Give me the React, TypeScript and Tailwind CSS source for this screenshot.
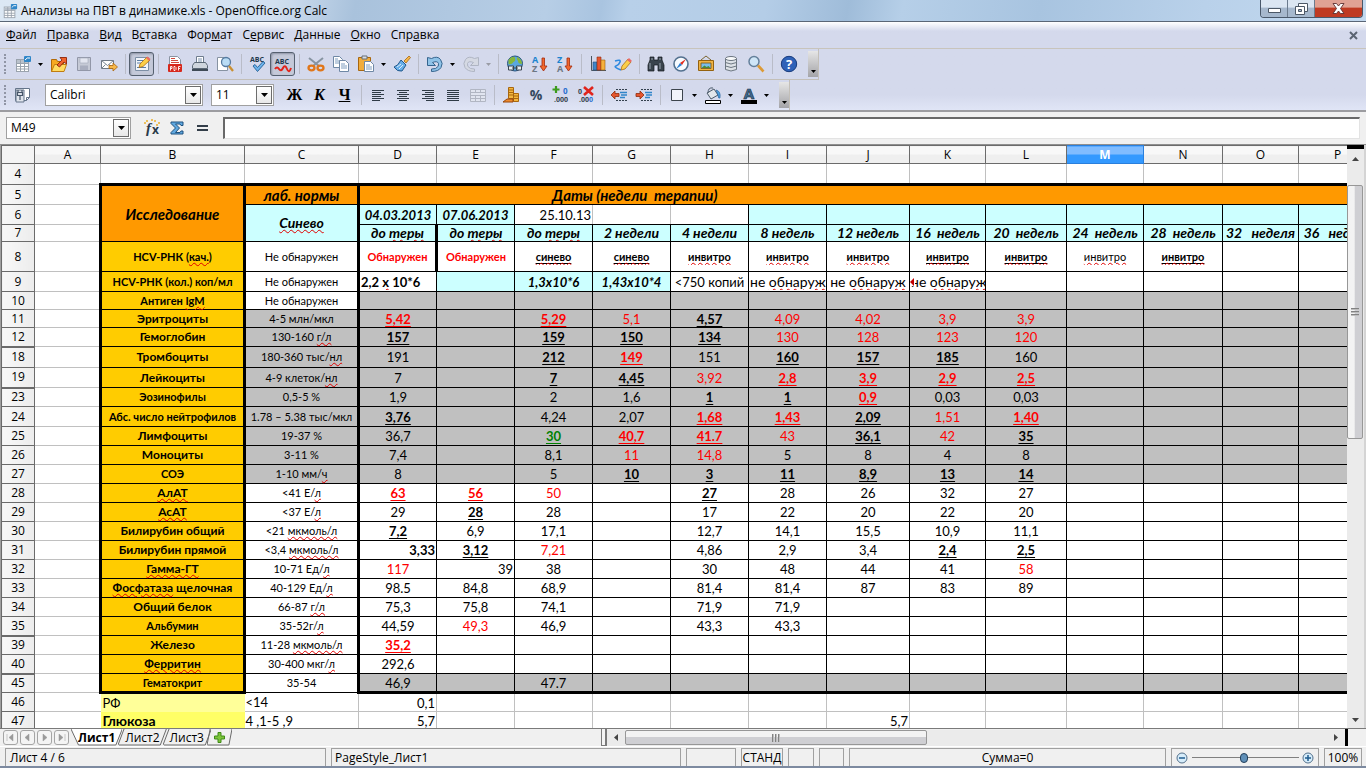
import type { ReactNode } from "react";
import { clsx } from "clsx";

const COLUMNS = [
  { name: "A", width: "w-[66px]" },
  { name: "B", width: "w-[144px]" },
  { name: "C", width: "w-[114px]" },
  { name: "D", width: "w-[78px]" },
  { name: "E", width: "w-[78px]" },
  { name: "F", width: "w-[78px]" },
  { name: "G", width: "w-[78px]" },
  { name: "H", width: "w-[78px]" },
  { name: "I", width: "w-[78px]" },
  { name: "J", width: "w-[83px]" },
  { name: "K", width: "w-[76px]" },
  { name: "L", width: "w-[81px]" },
  { name: "M", width: "w-[77px]" },
  { name: "N", width: "w-[79px]" },
  { name: "O", width: "w-[76px]" },
  { name: "P", width: "w-[78px]" },
];

const VALUE_COLUMNS = 13;

interface SheetRow {
  n: number;
  height: string;
  label: string;
  smallLabel?: boolean;
  norm: string;
  normFill?: string;
  fill: string;
  // "flags|text": b bold, u underline, r red, g green, i italic, s small, l large, R right, L left, c cyan, m overflow mark
  // words in {braces} are marked by the spell checker
  cells: string[];
  foldedBelow?: boolean;
}

const GREY = "bg-[#c0c0c0]";
const CYAN = "bg-[#ccffff]";

const ROWS: SheetRow[] = [
  {
    n: 8, height: "h-[30px]", label: "HCV-РНК ({кач.})", smallLabel: true, norm: "Не обнаружен", fill: "bg-white",
    cells: ["brs|Обнаружен", "brs|Обнаружен", "bus|{синево}", "bus|{синево}", "bs|{инвитро}", "bs|{инвитро}", "bs|{инвитро}", "bus|{инвитро}", "bus|{инвитро}", "s|{инвитро}", "bus|{инвитро}"],
  },
  {
    n: 9, height: "h-[20px]", label: "HCV-РНК (кол.) коп/мл", smallLabel: true, norm: "Не обнаружен", fill: "bg-white",
    cells: ["bL|2,2 {х} 10*6", "c|", "bic|1,3x10*6", "bic|1,43x10*4", "|<750 копий", "l|не {обнаруж}", "l|не {обнаруж}", "lm|не {обнаруж}"],
  },
  { n: 10, height: "h-[18px]", label: "Антиген {IgM}", smallLabel: true, norm: "Не обнаружен", fill: GREY, cells: [] },
  {
    n: 11, height: "h-[18px]", label: "Эритроциты", norm: "4-5 млн/мкл", normFill: GREY, fill: GREY,
    cells: ["bur|5,42", "", "bur|5,29", "r|5,1", "bu|4,57", "r|4,09", "r|4,02", "r|3,9", "r|3,9"],
  },
  {
    n: 12, height: "h-[19px]", label: "Гемоглобин", norm: "130-160 {г/л}", normFill: GREY, fill: GREY, foldedBelow: true,
    cells: ["bu|157", "", "bu|159", "bu|150", "bu|134", "r|130", "r|128", "r|123", "r|120"],
  },
  {
    n: 18, height: "h-[21px]", label: "Тромбоциты", norm: "180-360 тыс/{нл}", normFill: GREY, fill: GREY,
    cells: ["191", "", "bu|212", "bur|149", "151", "bu|160", "bu|157", "bu|185", "160"],
  },
  {
    n: 19, height: "h-[20px]", label: "Лейкоциты", norm: "4-9 клеток/{нл}", normFill: GREY, fill: GREY, foldedBelow: true,
    cells: ["7", "", "bu|7", "bu|4,45", "r|3,92", "bur|2,8", "bur|3,9", "bur|2,9", "bur|2,5"],
  },
  {
    n: 23, height: "h-[19px]", label: "Эозинофилы", smallLabel: true, norm: "0,5-5 %", normFill: GREY, fill: GREY,
    cells: ["1,9", "", "2", "1,6", "bu|1", "bu|1", "bur|0,9", "0,03", "0,03"],
  },
  {
    n: 24, height: "h-[20px]", label: "Абс. число нейтрофилов", smallLabel: true, norm: "1.78 – 5.38 тыс/мкл", normFill: GREY, fill: GREY,
    cells: ["bu|3,76", "", "4,24", "2,07", "bur|1,68", "bur|1,43", "bu|2,09", "r|1,51", "bur|1,40"],
  },
  {
    n: 25, height: "h-[19px]", label: "Лимфоциты", norm: "19-37 %", normFill: GREY, fill: GREY,
    cells: ["36,7", "", "bug|30", "bur|40,7", "bur|41.7", "r|43", "bu|36,1", "r|42", "bu|35"],
  },
  {
    n: 26, height: "h-[19px]", label: "Моноциты", norm: "3-11 %", normFill: GREY, fill: GREY,
    cells: ["7,4", "", "8,1", "r|11", "r|14,8", "5", "8", "4", "8"],
  },
  {
    n: 27, height: "h-[19px]", label: "СОЭ", smallLabel: true, norm: "1-10 мм/{ч}", normFill: GREY, fill: GREY,
    cells: ["8", "", "5", "bu|10", "bu|3", "bu|11", "bu|8,9", "bu|13", "bu|14"],
  },
  {
    n: 28, height: "h-[19px]", label: "{АлАТ}", norm: "<41 Е/{л}", fill: "bg-white",
    cells: ["bur|63", "bur|56", "r|50", "", "bu|27", "28", "26", "32", "27"],
  },
  {
    n: 29, height: "h-[19px]", label: "{АсАТ}", norm: "<37 Е/{л}", fill: "bg-white",
    cells: ["29", "bu|28", "28", "", "17", "22", "20", "22", "20"],
  },
  {
    n: 30, height: "h-[19px]", label: "Билирубин общий", norm: "<21 {мкмоль/л}", fill: "bg-white",
    cells: ["bu|7,2", "6,9", "17,1", "", "12,7", "14,1", "15,5", "10,9", "11,1"],
  },
  {
    n: 31, height: "h-[19px]", label: "Билирубин прямой", norm: "<3,4 {мкмоль/л}", fill: "bg-white",
    cells: ["bR|3,33", "bu|3,12", "r|7,21", "", "4,86", "2,9", "3,4", "bu|2,4", "bu|2,5"],
  },
  {
    n: 32, height: "h-[19px]", label: "{Гамма-ГТ}", norm: "10-71 Ед/{л}", fill: "bg-white",
    cells: ["r|117", "R|39", "38", "", "30", "48", "44", "41", "r|58"],
  },
  {
    n: 33, height: "h-[19px]", label: "{Фосфатаза} щелочная", norm: "40-129 Ед/{л}", fill: "bg-white",
    cells: ["98.5", "84,8", "68,9", "", "81,4", "81,4", "87", "83", "89"],
  },
  {
    n: 34, height: "h-[19px]", label: "Общий белок", norm: "66-87 {г/л}", fill: "bg-white",
    cells: ["75,3", "75,8", "74,1", "", "71,9", "71,9"],
  },
  {
    n: 35, height: "h-[19px]", label: "Альбумин", smallLabel: true, norm: "35-52г/{л}", fill: "bg-white", foldedBelow: true,
    cells: ["44,59", "r|49,3", "46,9", "", "43,3", "43,3"],
  },
  { n: 39, height: "h-[19px]", label: "Железо", norm: "11-28 {мкмоль/л}", fill: "bg-white", cells: ["bur|35,2"] },
  { n: 40, height: "h-[19px]", label: "{Ферритин}", norm: "30-400 мкг/{л}", fill: "bg-white", foldedBelow: true, cells: ["292,6"] },
  { n: 45, height: "h-[19px]", label: "Гематокрит", smallLabel: true, norm: "35-54", fill: GREY, cells: ["46,9", "", "47.7"] },
];

const WEEKS = ["до {теры}", "до {теры}", "до {теры}", "2 недели", "4 недели", "8 недель", "12 недель", "16  недель", "20  недель", "24  недель", "28  недель", "32   неделя", "36   недель"];

function SpellText({ text }: { text: string }) {
  return (
    <>
      {text.split(/[{}]/).map((part, i) =>
        i % 2 === 1 ? (
          <span key={i} className="underline decoration-[#e00000] decoration-wavy decoration-1 underline-offset-1">{part}</span>
        ) : (
          part
        )
      )}
    </>
  );
}

function ValueCell({ value, fill, className }: { value: string; fill: string; className?: string }) {
  const bar = value.indexOf("|");
  const flags = bar >= 0 ? value.slice(0, bar) : "";
  const text = bar >= 0 ? value.slice(bar + 1) : value;
  const has = (flag: string) => flags.includes(flag);
  return (
    <td className={clsx("border border-black p-0", has("c") ? CYAN : fill, className)}>
      <div
        className={clsx(
          "relative overflow-hidden whitespace-pre px-px leading-4",
          has("s") ? "text-[11px]" : has("l") ? "text-sm" : "text-[13px]",
          has("b") && "font-bold",
          has("i") && "italic",
          has("u") && "underline underline-offset-2",
          has("r") && "text-[#ff0000]",
          has("g") && "text-[#008000]",
          has("R") ? "text-right" : has("L") ? "text-left" : "text-center"
        )}
      >
        {has("m") && (
          <svg className="absolute left-0 top-1 bg-white" width="5" height="8" viewBox="0 0 5 8">
            <path d="M4 0v8L0 4z" fill="#c00000" />
          </svg>
        )}
        <SpellText text={text} />
      </div>
    </td>
  );
}

function RowHeader({ n, folded }: { n: number; folded?: boolean }) {
  return (
    <th
      scope="row"
      className={clsx(
        "border border-[#6b6b6b] bg-linear-to-r from-[#f8f8f8] to-[#ececec] p-0 text-center font-['Open_Sans','Noto_Sans',sans-serif] text-xs leading-4 font-normal not-italic",
        folded && "border-b-2"
      )}
    >
      {n}
    </th>
  );
}

const GRID = "border border-[#c0c0c0] p-0 bg-white leading-4";
const B_EDGES = "border-l-[3px] border-r-[3px]";

function Sheet() {
  return (
    <table className="w-[1375px] table-fixed border-collapse text-[13px] text-black font-['Lato','Noto_Sans',sans-serif]">
      <colgroup>
        <col className="w-[33px]" />
        {COLUMNS.map((column) => (
          <col key={column.name} className={column.width} />
        ))}
      </colgroup>
      <thead>
        <tr className="h-[18px] font-['Open_Sans','Noto_Sans',sans-serif] text-xs leading-4">
          <td className="border border-[#6b6b6b] bg-[#f4f4f4] p-0" />
          {COLUMNS.map((column) => (
            <th
              key={column.name}
              scope="col"
              className={clsx(
                "border p-0",
                column.name === "M"
                  ? "border-[#2a7fdc] bg-linear-to-b from-[#80bcff] from-50% to-[#3399ff] to-50% font-bold text-white"
                  : "border-[#6b6b6b] bg-linear-to-b from-[#f8f8f8] from-50% to-[#efefef] to-50% font-normal"
              )}
            >
              {column.name}
            </th>
          ))}
        </tr>
      </thead>
      <tbody>
        <tr className="h-[21px]">
          <RowHeader n={4} />
          {COLUMNS.map((column) => (
            <td key={column.name} className={GRID} />
          ))}
        </tr>
        <tr className="h-[20px] text-center text-[15px] font-bold italic">
          <RowHeader n={5} />
          <td className={GRID} />
          <td rowSpan={3} className={clsx("border border-t-[3px] border-black bg-[#ff9900] p-0 leading-4", B_EDGES)}>Исследование</td>
          <td className="border border-t-[3px] border-r-[3px] border-black bg-[#ff9900] p-0 leading-4">лаб. нормы</td>
          <td colSpan={7} className="border-t-[3px] border-b border-black bg-[#ff9900] p-0 leading-4 whitespace-pre">Даты (недели  терапии)</td>
          <td colSpan={6} className="border-t-[3px] border-b border-black bg-[#ff9900] p-0" />
        </tr>
        <tr className="h-[20px]">
          <RowHeader n={6} />
          <td className={GRID} />
          <td rowSpan={2} className={clsx("border border-r-[3px] border-black p-0 text-center text-sm font-bold italic", CYAN)}>
            <SpellText text="{Синево}" />
          </td>
          <ValueCell value="bic|04.03.2013" fill={CYAN} />
          <ValueCell value="bic|07.06.2013" fill={CYAN} />
          <ValueCell value="R|25.10.13" fill="bg-white" className="border-r-[#c0c0c0]" />
          <ValueCell value="" fill="bg-white" className="border-r-[#c0c0c0]" />
          <ValueCell value="" fill="bg-white" />
          {COLUMNS.slice(8).map((column) => (
            <ValueCell key={column.name} value="" fill={CYAN} />
          ))}
        </tr>
        <tr className="h-[17px]">
          <RowHeader n={7} />
          <td className={GRID} />
          {WEEKS.map((week, i) => (
            <ValueCell key={i} value={`bil|${week}`} fill={CYAN} className={i === 1 ? "border-l-[3px]" : undefined} />
          ))}
        </tr>
        {ROWS.map((row) => (
          <tr key={row.n} className={row.height}>
            <RowHeader n={row.n} folded={row.foldedBelow} />
            <td className={GRID} />
            <td
              className={clsx(
                "border border-black bg-[#ffcc00] p-0 text-center leading-4 font-bold whitespace-nowrap",
                row.smallLabel ? "text-[11px]" : "text-xs",
                B_EDGES,
                row.n === 45 && "border-b-[3px]"
              )}
            >
              <SpellText text={row.label} />
            </td>
            <td className={clsx("border border-r-[3px] border-black p-0 text-center text-[11px] leading-4 whitespace-nowrap", row.normFill ?? "bg-white")}>
              <SpellText text={row.norm} />
            </td>
            {Array.from({ length: VALUE_COLUMNS }, (_, i) => (
              <ValueCell
                key={i}
                value={row.cells[i] ?? ""}
                fill={row.fill}
                className={clsx(row.n === 8 && i === 1 && "border-l-[3px]", row.n === 45 && "border-b-[3px]")}
              />
            ))}
          </tr>
        ))}
        <tr className="h-[19px]">
          <RowHeader n={46} />
          <td className="border border-r-0 border-[#c0c0c0] p-0" />
          <td className="bg-[#ffff99] p-0 pl-0.5 leading-4">РФ</td>
          <td className="border border-l-0 border-[#c0c0c0] p-0 pl-px leading-4">&lt;14</td>
          <td className="border border-[#c0c0c0] p-0 pr-px text-right leading-4">0,1</td>
          {COLUMNS.slice(4).map((column) => (
            <td key={column.name} className={GRID} />
          ))}
        </tr>
        <tr className="h-[19px]">
          <RowHeader n={47} />
          <td className="border border-r-0 border-[#c0c0c0] p-0" />
          <td className="bg-[#ffff66] p-0 pl-0.5 text-sm leading-4 font-bold">Глюкоза</td>
          <td className="border border-l-0 border-[#c0c0c0] p-0 pl-px leading-4">4 ,1-5 ,9</td>
          <td className="border border-[#c0c0c0] p-0 pr-px text-right leading-4">5,7</td>
          {COLUMNS.slice(4).map((column) => (
            <td key={column.name} className="border border-[#c0c0c0] p-0 pr-px text-right leading-4">
              {column.name === "J" && "5,7"}
            </td>
          ))}
        </tr>
      </tbody>
    </table>
  );
}

function Icon({ children, size = 18 }: { children: ReactNode; size?: number }) {
  return (
    <svg width={size} height={size} viewBox="0 0 18 18" fill="none" aria-hidden="true">
      {children}
    </svg>
  );
}

const lines = (rows: [number, number][]) => (
  <Icon>
    {rows.map(([x, w], i) => (
      <rect key={i} x={x} y={4 + i * 2} width={w} height="1" fill="#2f3b46" />
    ))}
  </Icon>
);

const calcShapes = (
  <>
    <rect x="2.500" y="4.500" width="12" height="12" fill="#fff" stroke="#9aa3ad" />
    <path d="M3 5h11v3H3z" fill="#b9c1cb" />
    <path d="M2.500 8.500h12M2.500 11.500h12M2.500 14h12M6.500 4.500v12M10.500 4.500v12" stroke="#9aa3ad" />
    <rect x="10" y="1" width="7" height="6" rx="1" fill="#2f86c8" />
    <path d="M11 5q2-3 5-2" stroke="#fff" />
  </>
);

const icons = {
  calc: <Icon>{calcShapes}</Icon>,
  calcSmall: <Icon size={16}>{calcShapes}</Icon>,
  open: (
    <Icon>
      <path d="M1.500 16.500v-12h5l1 2h6v10z" fill="#f6a921" stroke="#b26a08" />
      <path d="M1.500 16.500l3-7h12l-2.500 7z" fill="#ffdc62" stroke="#c07c10" />
      <path d="M7 10l5-5-2-2.500h6.500V9L14 7l-4.500 5z" fill="#f0642d" stroke="#8f2509" strokeWidth=".9" />
    </Icon>
  ),
  save: (
    <Icon>
      <path d="M2.500 2.500h13v13h-13z" fill="#c6cad6" stroke="#9297a8" />
      <path d="M5 3h8v5H5z" fill="#e3e6f0" stroke="#a3a8b8" strokeWidth=".6" />
      <path d="M5 10.500h8V15H5z" fill="#a9aebf" />
    </Icon>
  ),
  mail: (
    <Icon>
      <path d="M1.500 5.500h12v8h-12z" fill="#fdfdfd" stroke="#6f7a86" />
      <path d="M1.500 5.500l6 5 6-5M1.500 13.500l4-4M13.500 13.500l-4-4" stroke="#7c8794" />
      <path d="M9 10.500h4V8l4.500 4-4.500 4v-2.500H9z" fill="#f7b84a" stroke="#a9640c" strokeWidth=".8" />
    </Icon>
  ),
  edit: (
    <Icon>
      <path d="M2.500 2.500h13v13h-13z" fill="#f2f5fa" stroke="#7d8fa6" />
      <path d="M4 5.500h6M4 8h4M4 12.500h9" stroke="#5c7ea6" />
      <path d="M6 12.500l1-3.500 7-7 3 3-7 6.500z" fill="#fccf49" stroke="#ad6d12" strokeWidth=".8" />
      <path d="M13 3l1.500-1.500 3 2.500L16 6z" fill="#ea6b66" />
    </Icon>
  ),
  pdf: (
    <Icon>
      <path d="M3.500 1.500h8l3 3v11h-11z" fill="#fff" stroke="#8a94a3" />
      <path d="M5 3.500h4M5 5.500h7M5 7.500h8" stroke="#d0483c" />
      <rect x="2" y="9" width="14" height="8" rx="1" fill="#d7281d" />
      <path d="M4.500 15.500v-4H6v2H4.500M8 11.500v4h1l1-1v-2l-1-1zM12.500 15.500v-4h2M12.500 13.500H14" stroke="#fff" strokeWidth=".9" />
    </Icon>
  ),
  print: (
    <Icon>
      <path d="M5.500 1.500h7V8h-7z" fill="#fff" stroke="#6f7d8e" />
      <path d="M7 4h4M7 6h4" stroke="#7b91ad" />
      <path d="M1.500 10.500l2-3h11l2 3v3h-15z" fill="#cfd5dd" stroke="#5c6876" />
      <path d="M1 15h16" stroke="#3f4a56" strokeWidth="2" />
    </Icon>
  ),
  preview: (
    <Icon>
      <path d="M1.500 2.500h10v13h-10z" fill="#fff" stroke="#8793a2" />
      <circle cx="10" cy="7" r="4.500" fill="#b9dcf5" stroke="#567ba1" strokeWidth="1.300" />
      <path d="M13 11l4 5" stroke="#c98f31" strokeWidth="2.300" />
    </Icon>
  ),
  globe: (
    <Icon>
      <circle cx="9" cy="8.500" r="7.500" fill="#5aa7df" stroke="#27527d" />
      <path d="M2.500 5q3-4 6-3 2 4-1 5-2 3-5 2zM11 2q5 2 5 7-4 0-4-3-2-2-1-4" fill="#86b63b" />
      <path d="M2.500 11h5v4h-5zM10.500 11h5v4h-5zM6 13h6" fill="#e6ebef" stroke="#3b4650" />
    </Icon>
  ),
  sortAZ: (
    <Icon>
      <text x="1" y="8" fontSize="9" fontWeight="bold" fill="#1b84cf" fontFamily="Open Sans">A</text>
      <text x="1" y="17" fontSize="9" fontWeight="bold" fill="#6d7782" fontFamily="Open Sans">Z</text>
      <path d="M11 3h2.500v8H16l-3.500 5L9 11h2z" fill="#f1682d" stroke="#a22a0d" strokeWidth=".8" />
    </Icon>
  ),
  sortZA: (
    <Icon>
      <text x="1" y="8" fontSize="9" fontWeight="bold" fill="#1b84cf" fontFamily="Open Sans">Z</text>
      <text x="1" y="17" fontSize="9" fontWeight="bold" fill="#6d7782" fontFamily="Open Sans">A</text>
      <path d="M11 3h2.500v8H16l-3.500 5L9 11h2z" fill="#f1682d" stroke="#a22a0d" strokeWidth=".8" />
    </Icon>
  ),
  spell: (
    <Icon>
      <text x="1" y="7" fontSize="7" fontWeight="bold" fill="#22384e" fontFamily="Open Sans">ABC</text>
      <path d="M4 11l2-1.500 2.500 3L14 6.500l2 1.500-7.500 8.500z" fill="#6db4ec" stroke="#235d94" strokeWidth=".9" />
    </Icon>
  ),
  autospell: (
    <Icon>
      <text x="1" y="9" fontSize="7" fontWeight="bold" fill="#22384e" fontFamily="Open Sans">ABC</text>
      <path d="M1 14q2-3 4 0t4-1 4 1 4-1" stroke="#e2231a" strokeWidth="2" />
    </Icon>
  ),
  cut: (
    <Icon>
      <path d="M2 3l10 8M16 3L6 11" stroke="#8794a1" strokeWidth="2" />
      <ellipse cx="4.500" cy="13" rx="3" ry="2.300" stroke="#e0761a" strokeWidth="2.300" />
      <ellipse cx="13.500" cy="13" rx="3" ry="2.300" stroke="#e0761a" strokeWidth="2.300" />
    </Icon>
  ),
  copy: (
    <Icon>
      <path d="M1.500 1.500h6l3 3v8h-9z" fill="#fff" stroke="#6f88a5" />
      <path d="M3 4h3M3 6h5M3 8h5" stroke="#7f9dbf" />
      <path d="M7.500 5.500h6l3 3v8h-9z" fill="#fff" stroke="#6f88a5" />
      <path d="M9 9h4M9 11h6M9 13h6" stroke="#7f9dbf" />
    </Icon>
  ),
  paste: (
    <Icon>
      <path d="M1.500 2.500h12v13h-12z" fill="#f1ad3c" stroke="#a8670f" />
      <path d="M5 1h5v3H5z" fill="#d8dde3" stroke="#666f79" />
      <path d="M7.500 6.500h6l3 3v7h-9z" fill="#fff" stroke="#6f88a5" />
      <path d="M9 10h4M9 12h6M9 14h6" stroke="#7f9dbf" />
    </Icon>
  ),
  brush: (
    <Icon>
      <path d="M11 6l5-5 1.500 1.500L13 8z" fill="#f5b74a" stroke="#a8670f" strokeWidth=".8" />
      <path d="M8 5l5 5-4 6q-5 1-8-4 4-1 7-7z" fill="#67aee8" stroke="#23598c" />
      <path d="M4 12l4-3M6 14l4-4" stroke="#d8ecfb" />
    </Icon>
  ),
  undo: (
    <Icon>
      <path d="M1.500 2.500v8h8l-3-3q5-2 6 1t-3 5l-4 .5v2.500q7 0 9.500-4t-.5-8-9-1z" fill="#8fc3e8" stroke="#35648e" />
    </Icon>
  ),
  redo: (
    <Icon>
      <path d="M16.500 2.500v8h-8l3-3q-5-2-6 1t3 5l4 .5v2.500q-7 0-9.500-4t.5-8 9-1z" fill="#d5d9e3" stroke="#afb5c3" />
    </Icon>
  ),
  chart: (
    <Icon>
      <path d="M2.500 1v14.500H17" stroke="#4a5662" />
      <path d="M4 7h4v8H4z" fill="#3f86c8" stroke="#234f7d" strokeWidth=".6" />
      <path d="M8 2h4v13H8z" fill="#e5562e" stroke="#8f290d" strokeWidth=".6" />
      <path d="M12 5h4v10h-4z" fill="#f6b13c" stroke="#9b600d" strokeWidth=".6" />
    </Icon>
  ),
  draw: (
    <Icon>
      <path d="M1 6q6-2 5 1t-4 4 5 4" stroke="#2d8ae0" strokeWidth="1.600" />
      <path d="M7 15l1-4 6-7 3 3-6 7z" fill="#fccf49" stroke="#ad6d12" strokeWidth=".8" />
      <path d="M13 5l2-2 3 3-2 1.500z" fill="#ea6b66" />
    </Icon>
  ),
  find: (
    <Icon>
      <path d="M3 2h4v3h4V2h4v3l2 5v6h-6v-6H7v6H1v-6l2-5z" fill="#39434d" stroke="#12181d" strokeWidth=".7" />
      <path d="M3 8v6M13 8v6M5 3v2M13 3v2" stroke="#99a5b0" />
    </Icon>
  ),
  compass: (
    <Icon>
      <circle cx="9" cy="9" r="7" fill="#f7fbff" stroke="#53718f" strokeWidth="1.600" />
      <path d="M14 4L8 8l2 2z" fill="#e32b1c" />
      <path d="M4 14l4-6 2 2z" fill="#2c7fd2" />
    </Icon>
  ),
  gallery: (
    <Icon>
      <path d="M4 5l5-4 5 4" stroke="#7c6630" />
      <path d="M1.500 5.500h15v10h-15z" fill="#efb343" stroke="#94620f" />
      <path d="M4 8h10v5.500H4z" fill="#78bdea" stroke="#7a5010" strokeWidth=".8" />
      <path d="M4.500 13l3-2.500 2 1.500 2-1 2 2z" fill="#4c8b35" />
    </Icon>
  ),
  database: (
    <Icon>
      <path d="M3.500 3.500v11q5.500 3 11 0v-11z" fill="#dde2e7" stroke="#6c7681" />
      <ellipse cx="9" cy="3.500" rx="5.500" ry="2" fill="#f8fafb" stroke="#6c7681" />
      <path d="M3.500 7.500q5.500 3 11 0M3.500 11q5.500 3 11 0" stroke="#6c7681" />
    </Icon>
  ),
  zoom: (
    <Icon>
      <circle cx="7" cy="6.500" r="5" fill="#cfe6f7" stroke="#64809b" strokeWidth="1.500" />
      <path d="M11 10.500l5.500 6" stroke="#dc9a36" strokeWidth="2.600" />
    </Icon>
  ),
  help: (
    <Icon>
      <circle cx="9" cy="9" r="7.700" fill="#2f62b8" stroke="#173a7c" />
      <text x="9" y="14" textAnchor="middle" fontSize="13" fontWeight="bold" fill="#fff" fontFamily="Open Sans">?</text>
    </Icon>
  ),
  styles: (
    <Icon>
      <path d="M1.500 2.500h14v9l-3 3h-11z" fill="#fff" stroke="#65758a" />
      <path d="M12.500 14.500v-3h3" stroke="#65758a" />
      <path d="M2 4h8v12H2z" fill="#dfe4ec" stroke="#65758a" />
      <path d="M3.500 9.500v-3h5v3zM6 9.500V14M4 4v2M8 4v2" stroke="#465568" strokeWidth="1.200" />
    </Icon>
  ),
  left: lines([[3, 12], [3, 9], [3, 12], [3, 9], [3, 12], [3, 8]]),
  center: lines([[3, 12], [5, 8], [3, 12], [5, 8], [3, 12], [5, 8]]),
  right: lines([[3, 12], [6, 9], [3, 12], [6, 9], [3, 12], [7, 8]]),
  justify: lines([[3, 12], [3, 12], [3, 12], [3, 12], [3, 12], [3, 12]]),
  merge: (
    <Icon>
      <path d="M1.500 3.500h15v12h-15zM1.500 6.500h15M1.500 9.500h15M1.500 12.500h15M6.500 3.500v3M11.500 3.500v3M6.500 9.500v6M11.500 9.500v6" stroke="#b1b6c3" fill="#e1e5f0" />
    </Icon>
  ),
  currency: (
    <Icon>
      <path d="M6.500 1.500h5v11h-5zM11.500 7.500h5v8h-5z" fill="#f3b840" stroke="#a8670f" />
      <path d="M6 4h5M6 6.500h5M6 9h5M11 10h5M11 12.500h5" stroke="#a8670f" />
      <path d="M1 16l4-3h6v3z" fill="#f08b2e" stroke="#98490b" />
    </Icon>
  ),
  percent: (
    <Icon>
      <text x="9" y="14" textAnchor="middle" fontSize="14" fontWeight="bold" fill="#34495e" fontFamily="Open Sans">%</text>
    </Icon>
  ),
  addDecimal: (
    <Icon>
      <path d="M4 0v7M.5 3.500h7" stroke="#3c9b1c" strokeWidth="2.200" />
      <text x="11" y="8" fontSize="8" fontWeight="bold" fill="#2a6fd0" fontFamily="Open Sans">0</text>
      <text x="2" y="16" fontSize="7" fontWeight="bold" fill="#34414e" fontFamily="Open Sans">.000</text>
    </Icon>
  ),
  delDecimal: (
    <Icon>
      <text x="1" y="8" fontSize="7" fontWeight="bold" fill="#34414e" fontFamily="Open Sans">0</text>
      <text x="2" y="16" fontSize="7" fontWeight="bold" fill="#34414e" fontFamily="Open Sans">
        .00<tspan fill="#2a6fd0">0</tspan>
      </text>
      <path d="M7 1l9 8M16 1L7 9" stroke="#e0241c" strokeWidth="2.600" />
    </Icon>
  ),
  outdent: (
    <Icon>
      <path d="M6 3.500h11M6 14.500h11" stroke="#34414e" strokeDasharray="2 1" />
      <path d="M10 6.500h7M11 9h6M10 11.500h5" stroke="#2f85c9" strokeWidth="1.500" />
      <path d="M1 9l4-4v2.500h4v3H5V13z" fill="#e5562e" stroke="#902b0c" strokeWidth=".8" />
    </Icon>
  ),
  indent: (
    <Icon>
      <path d="M6 3.500h11M6 14.500h11" stroke="#34414e" strokeDasharray="2 1" />
      <path d="M10 6.500h7M11 9h6M10 11.500h5" stroke="#2f85c9" strokeWidth="1.500" />
      <path d="M9 9L5 5v2.500H1v3h4V13z" fill="#e5562e" stroke="#902b0c" strokeWidth=".8" />
    </Icon>
  ),
  border: (
    <Icon>
      <path d="M3.500 3.500h11v11h-11z" fill="#f2f4fa" stroke="#3c444c" />
    </Icon>
  ),
  fill: (
    <Icon>
      <path d="M3 7l7-4 4 6-7 4z" fill="#e1e6eb" stroke="#4b5a69" />
      <path d="M4 7q0-6 5-5" stroke="#4b5a69" />
      <path d="M12 4q5 1 4 8-2 1-2-3z" fill="#4da0df" stroke="#235d94" strokeWidth=".6" />
      <path d="M1.500 14.500h15v3h-15z" fill="#fff" stroke="#000" />
    </Icon>
  ),
  color: (
    <Icon>
      <text x="9" y="13" textAnchor="middle" fontSize="15" fontWeight="bold" fill="#3f6c93" stroke="#1c3247" strokeWidth=".7" fontFamily="Open Sans">A</text>
      <path d="M1 14h16v4H1z" fill="#000" />
    </Icon>
  ),
};

function Tool({ label, children, pressed }: { label: string; children: ReactNode; pressed?: boolean }) {
  return (
    <button
      aria-label={label}
      className={clsx(
        "flex h-6 w-[25px] shrink-0 items-center justify-center",
        pressed && "rounded-[3px] border border-[#55606f] bg-[#c4c9d9] shadow-[inset_1px_1px_2px_#8d93a5]"
      )}
    >
      {children}
    </button>
  );
}

function Arrow({ label, disabled }: { label: string; disabled?: boolean }) {
  return (
    <button aria-label={label} className="flex h-6 w-[11px] shrink-0 items-center justify-center">
      <svg width="5" height="3" viewBox="0 0 5 3"><path d="M0 0h5L2.500 3z" fill={disabled ? "#9a9ca5" : "#000"} /></svg>
    </button>
  );
}

function Separator() {
  return <div className="mx-[3px] h-5 w-0.5 shrink-0 border-r border-[#b9bcc8]" />;
}

function Grip() {
  return <div className="mr-1 ml-1 h-5 w-0 shrink-0 border-l-2 border-dotted border-[#9095a5]" />;
}

function Overflow() {
  return (
    <button aria-label="Ещё" className="ml-[7px] flex h-[26px] w-2.5 shrink-0 items-end justify-center bg-linear-to-b from-[#e6e6e6] to-[#a4a4a8] pb-1">
      <svg width="5" height="3" viewBox="0 0 5 3"><path d="M0 0h5L2.500 3z" fill="#000" /></svg>
    </button>
  );
}

function Picker({ label, value, className }: { label: string; value: string; className: string }) {
  return (
    <div className={clsx("relative h-[22px] shrink-0", className)}>
      <select aria-label={label} className="block h-full w-full appearance-none border border-[#a0a0a0] bg-white pl-1 text-xs text-black">
        <option>{value}</option>
      </select>
      <span className="pointer-events-none absolute top-0.5 right-0.5 bottom-0.5 flex w-4 items-center justify-center border border-[#6d6d6d] bg-linear-to-b from-white to-[#e8e8e8]">
        <svg width="7" height="4" viewBox="0 0 7 4"><path d="M0 0h7L3.500 4z" fill="#000" /></svg>
      </span>
    </div>
  );
}

const MENU = [
  ["", "Ф", "айл"],
  ["", "П", "равка"],
  ["", "В", "ид"],
  ["В", "с", "тавка"],
  ["Фор", "м", "ат"],
  ["С", "е", "рвис"],
  ["", "Д", "анные"],
  ["", "О", "кно"],
  ["Спр", "а", "вка"],
];

function TitleBar() {
  return (
    <header className="flex h-[22px] shrink-0 items-start border-b border-[#5a6676] bg-[linear-gradient(100deg,#dce8f4_0%,#d2e0f0_20%,#a9c2dc_26%,#b7cee6_40%,#a9c4e0_44%,#b8d0e9_46%,#b4cde7_56%,#9fbcd9_62%,#b6cfe8_66%,#a8c4e0_76%,#b9d1ea_88%,#c3d9ef_100%)]">
      <div className="flex h-[21px] items-center gap-[3px] pl-0.5">
        {icons.calcSmall}
        <h1 className="text-xs text-black">Анализы на ПВТ в динамике.xls - OpenOffice.org Calc</h1>
      </div>
      <div className="mr-[3px] ml-auto flex h-[18px] overflow-hidden rounded-b-[4px] border border-t-0 border-[#49586a]">
        <button aria-label="Свернуть" className="flex w-[27px] items-end justify-center border-r border-[#6b7b8d] bg-linear-to-b from-[#dbe6f2] from-40% to-[#a6b8cd] to-50% pb-1">
          <svg width="13" height="5" viewBox="0 0 13 5"><path d="M.5.500h12v4H.500z" fill="#fff" stroke="#4c5866" /></svg>
        </button>
        <button aria-label="Восстановить" className="flex w-[27px] items-center justify-center border-r border-[#6b7b8d] bg-linear-to-b from-[#dbe6f2] from-40% to-[#a6b8cd] to-50%">
          <svg width="13" height="12" viewBox="0 0 13 12">
            <path d="M3.500.500h9v8h-9z" fill="#fff" stroke="#4c5866" />
            <path d="M.5 3.500h9v8H.500z" fill="#fff" stroke="#4c5866" />
            <path d="M3.500 6.500h3v2h-3z" fill="#a6b8cd" stroke="#4c5866" />
          </svg>
        </button>
        <button aria-label="Закрыть" className="flex w-[47px] items-center justify-center bg-linear-to-b from-[#e0a294] from-40% to-[#bf3a22] to-50%">
          <svg width="13" height="11" viewBox="0 0 13 11">
            <path d="M1 .500h3.500l2 2.500 2-2.500H12L8.500 5.500l3.500 5H8.500l-2-2.500-2 2.500H1l3.500-5z" fill="#fff" stroke="#5c3030" strokeWidth=".9" />
          </svg>
        </button>
      </div>
    </header>
  );
}

function Toolbars() {
  return (
    <div className="shrink-0 border-b-2 border-[#9c9ca0] bg-linear-to-b from-[#d4d9ec] from-75% to-[#e0e5f6]">
      <div className="flex">
        <div className="flex h-[31px] items-center border-r border-b border-[#c3bfb8]">
          <Grip />
          <Tool label="Создать">{icons.calc}</Tool>
          <Arrow label="Варианты создания" />
          <Tool label="Открыть">{icons.open}</Tool>
          <Tool label="Сохранить">{icons.save}</Tool>
          <Tool label="Отправить">{icons.mail}</Tool>
          <Separator />
          <Tool label="Правка файла" pressed>{icons.edit}</Tool>
          <Separator />
          <Tool label="Экспорт в PDF">{icons.pdf}</Tool>
          <Tool label="Печать">{icons.print}</Tool>
          <Tool label="Предварительный просмотр">{icons.preview}</Tool>
          <Separator />
          <Tool label="Орфография">{icons.spell}</Tool>
          <Tool label="Автопроверка" pressed>{icons.autospell}</Tool>
          <Separator />
          <Tool label="Вырезать">{icons.cut}</Tool>
          <Tool label="Копировать">{icons.copy}</Tool>
          <Tool label="Вставить">{icons.paste}</Tool>
          <Arrow label="Варианты вставки" />
          <Tool label="Формат по образцу">{icons.brush}</Tool>
          <Separator />
          <Tool label="Отменить">{icons.undo}</Tool>
          <Arrow label="Список отмены" />
          <Tool label="Вернуть">{icons.redo}</Tool>
          <Arrow label="Список возврата" disabled />
          <Separator />
          <Tool label="Гиперссылка">{icons.globe}</Tool>
          <Tool label="По возрастанию">{icons.sortAZ}</Tool>
          <Tool label="По убыванию">{icons.sortZA}</Tool>
          <Separator />
          <Tool label="Диаграмма">{icons.chart}</Tool>
          <Tool label="Рисование">{icons.draw}</Tool>
          <Separator />
          <Tool label="Найти">{icons.find}</Tool>
          <Tool label="Навигатор">{icons.compass}</Tool>
          <Tool label="Галерея">{icons.gallery}</Tool>
          <Tool label="Источники данных">{icons.database}</Tool>
          <Tool label="Масштаб">{icons.zoom}</Tool>
          <Separator />
          <Tool label="Справка">{icons.help}</Tool>
          <Overflow />
        </div>
      </div>
      <div className="flex">
        <div className="flex h-[30px] items-center border-r border-[#c3bfb8]">
          <Grip />
          <Tool label="Стили">{icons.styles}</Tool>
          <Picker label="Шрифт" value="Calibri" className="mr-2 ml-2.5 w-[158px]" />
          <Picker label="Размер" value="11" className="mr-2 w-[63px]" />
          <Tool label="Жирный"><b className="font-['Liberation_Serif',serif] text-base leading-5">Ж</b></Tool>
          <Tool label="Курсив"><b className="font-['Liberation_Serif',serif] text-base leading-5 italic">К</b></Tool>
          <Tool label="Подчёркнутый"><b className="font-['Liberation_Serif',serif] text-base leading-5 underline">Ч</b></Tool>
          <Separator />
          <Tool label="По левому краю">{icons.left}</Tool>
          <Tool label="По центру">{icons.center}</Tool>
          <Tool label="По правому краю">{icons.right}</Tool>
          <Tool label="По ширине">{icons.justify}</Tool>
          <Tool label="Объединить ячейки">{icons.merge}</Tool>
          <Separator />
          <Tool label="Денежный формат">{icons.currency}</Tool>
          <Tool label="Процентный формат">{icons.percent}</Tool>
          <Tool label="Добавить разряд">{icons.addDecimal}</Tool>
          <Tool label="Удалить разряд">{icons.delDecimal}</Tool>
          <Separator />
          <Tool label="Уменьшить отступ">{icons.outdent}</Tool>
          <Tool label="Увеличить отступ">{icons.indent}</Tool>
          <Separator />
          <Tool label="Обрамление">{icons.border}</Tool>
          <Arrow label="Варианты обрамления" />
          <Tool label="Цвет фона">{icons.fill}</Tool>
          <Arrow label="Выбор цвета фона" />
          <Tool label="Цвет шрифта">{icons.color}</Tool>
          <Arrow label="Выбор цвета шрифта" />
          <Overflow />
        </div>
      </div>
    </div>
  );
}

function FormulaBar() {
  return (
    <div className="flex h-[33px] shrink-0 items-center border-b border-[#8f8f8f] bg-[#f0f0f0] pr-1.5 pl-1.5">
      <Picker label="Область листа" value="M49" className="w-[125px]" />
      <div className="mr-[9px] ml-2 flex">
        <Tool label="Мастер функций">
          <svg width="18" height="18" viewBox="0 0 18 18">
            <text x="3" y="14" fontSize="15" fontStyle="italic" fontWeight="bold" fill="#2b3a48" fontFamily="Liberation Serif">f</text>
            <text x="9" y="15" fontSize="12" fontWeight="bold" fill="#2b3a48" fontFamily="Open Sans">x</text>
            <path d="M3 2h2M1 4h2M11 2h2M15 4h2M13 6h2M8 1h2" stroke="#eab02c" strokeWidth="1.500" />
          </svg>
        </Tool>
        <Tool label="Сумма">
          <svg width="18" height="18" viewBox="0 0 18 18">
            <path d="M3 3h12v3.500h-2L12 5H7.500l4 4-4 4.500H12l1-1.500h2V15H3v-1.500L7.500 9 3 4.500z" fill="#5fa8e0" stroke="#1f517f" />
          </svg>
        </Tool>
        <Tool label="Функция">
          <svg width="18" height="18" viewBox="0 0 18 18"><path d="M4 7h11M4 11h11" stroke="#333e49" strokeWidth="2" /></svg>
        </Tool>
      </div>
      <input
        aria-label="Строка ввода"
        className="h-[22px] min-w-0 flex-1 border border-t-2 border-l-2 border-[#e3e3e3] border-t-[#696969] border-l-[#696969] bg-white px-1 text-xs outline-none"
      />
    </div>
  );
}

function NavButton({ label, d }: { label: string; d: string }) {
  return (
    <button aria-label={label} className="flex h-[15px] w-[15px] shrink-0 items-center justify-center rounded-[3px] border border-[#a5a5a5] bg-[#f4f4f4]">
      <svg width="9" height="9" viewBox="0 0 9 9"><path d={d} fill="#9a9a9a" stroke="#9a9a9a" strokeWidth=".5" /></svg>
    </button>
  );
}

function SheetTab({ children, active, label }: { children: ReactNode; active?: boolean; label?: string }) {
  return (
    <button
      aria-label={label}
      className={clsx("relative -mr-1 flex h-[17px] shrink-0 items-center px-[7px] text-xs leading-4", active && "z-10 font-bold")}
    >
      <svg className="absolute inset-0 h-full w-full" viewBox="0 0 48 17" preserveAspectRatio="none" aria-hidden="true">
        <path d={active ? "M0 0l7 16h35l6-16" : "M0 16L6 0M1 16h41l6-16"} fill={active ? "#fff" : "none"} stroke="#6b6b6b" vectorEffect="non-scaling-stroke" />
      </svg>
      <span className="relative">{children}</span>
    </button>
  );
}

function BottomBar() {
  return (
    <div className="flex h-[18px] shrink-0 items-center border-t border-[#7a7a7a] bg-[#f0f0f0] pr-[18px]">
      <div className="flex w-[607px] shrink-0 items-center">
        <div className="flex gap-[2px] pl-[3px]">
          <NavButton label="Первый лист" d="M1 1v7M7 1v7L3 4.500z" />
          <NavButton label="Предыдущий лист" d="M6 1v7L2 4.500z" />
          <NavButton label="Следующий лист" d="M3 1v7l4-3.500z" />
          <NavButton label="Последний лист" d="M8 1v7M2 1v7l4-3.500z" />
        </div>
        <div className="ml-0.5 flex">
          <SheetTab active>Лист1</SheetTab>
          <SheetTab>Лист2</SheetTab>
          <SheetTab>Лист3</SheetTab>
          <SheetTab label="Добавить лист">
            <svg width="11" height="11" viewBox="0 0 11 11"><path d="M4 .500h3V4h3.500v3H7v3.500H4V7H.500V4H4z" fill="#7cc43a" stroke="#3f8a17" /></svg>
          </SheetTab>
        </div>
        <div className="ml-auto h-[17px] w-1.5 border-r-2 border-b border-l border-[#7a7a7a] bg-[#f4f4f4]" />
      </div>
      <div className="flex h-4 min-w-0 flex-1 items-center bg-[#ebebeb]">
        <button aria-label="Прокрутить влево" className="flex h-4 w-[18px] shrink-0 items-center justify-center">
          <svg width="4" height="7" viewBox="0 0 4 7"><path d="M4 0v7L0 3.500z" fill="#444" /></svg>
        </button>
        <div className="min-w-0 flex-1">
          <div className="flex h-[15px] w-[43%] items-center justify-center gap-px rounded-[2px] border border-[#979797] bg-linear-to-b from-[#f3f3f3] from-45% to-[#cfcfd3] to-50%">
            <i className="h-2 w-0.5 bg-linear-to-r from-[#666] to-[#ddd]" />
            <i className="h-2 w-0.5 bg-linear-to-r from-[#666] to-[#ddd]" />
            <i className="h-2 w-0.5 bg-linear-to-r from-[#666] to-[#ddd]" />
          </div>
        </div>
        <button aria-label="Прокрутить вправо" className="flex h-4 w-[18px] shrink-0 items-center justify-center">
          <svg width="4" height="7" viewBox="0 0 4 7"><path d="M0 0v7l4-3.500z" fill="#444" /></svg>
        </button>
      </div>
      <div className="h-[17px] w-[3px] bg-black" />
    </div>
  );
}

function VerticalScroll() {
  return (
    <div className="flex w-[19px] shrink-0 flex-col border-r-2 border-[#d4d4d4] bg-[#ebebeb]">
      <div className="h-1 shrink-0 bg-black" />
      <button aria-label="Прокрутить вверх" className="flex h-9 shrink-0 justify-center pt-2">
        <svg width="7" height="4" viewBox="0 0 7 4"><path d="M0 4h7L3.500 0z" fill="#444" /></svg>
      </button>
      <div className="min-h-0 flex-1">
        <div className="mr-px flex h-[48%] flex-col items-center justify-center gap-px rounded-[2px] border border-[#979797] bg-linear-to-r from-[#f3f3f3] from-45% to-[#cfcfd3] to-50%">
          <i className="h-0.5 w-2 bg-linear-to-b from-[#666] to-[#ddd]" />
          <i className="h-0.5 w-2 bg-linear-to-b from-[#666] to-[#ddd]" />
          <i className="h-0.5 w-2 bg-linear-to-b from-[#666] to-[#ddd]" />
        </div>
      </div>
      <button aria-label="Прокрутить вниз" className="flex h-[14px] shrink-0 justify-center pt-1">
        <svg width="7" height="4" viewBox="0 0 7 4"><path d="M0 0h7L3.500 4z" fill="#444" /></svg>
      </button>
    </div>
  );
}

function StatusField({ className, children }: { className: string; children?: ReactNode }) {
  return <div className={clsx("flex h-[18px] items-center border border-b-0 border-[#a0a0a0] leading-4 whitespace-nowrap", className)}>{children}</div>;
}

function StatusBar() {
  return (
    <footer className="flex h-[22px] shrink-0 items-start gap-[5px] border-t border-b-2 border-t-white border-b-[#7d8aa0] bg-[#f0f0f0] pt-px pr-1 pl-[5px] text-xs">
      <StatusField className="min-w-0 flex-1 pl-1">Лист 4 / 6</StatusField>
      <StatusField className="w-[350px] shrink-0 pl-[3px]">PageStyle_Лист1</StatusField>
      <StatusField className="w-[50px] shrink-0" />
      <StatusField className="w-[42px] shrink-0 justify-center">СТАНД</StatusField>
      <StatusField className="w-[26px] shrink-0" />
      <StatusField className="w-[25px] shrink-0" />
      <StatusField className="min-w-0 flex-1 justify-center">Сумма=0</StatusField>
      <StatusField className="w-[148px] shrink-0 justify-between px-1">
        <button aria-label="Уменьшить">
          <svg width="12" height="12" viewBox="0 0 12 12"><circle cx="6" cy="6" r="5" fill="#d6ecfa" stroke="#54718c" /><path d="M3 6h6" stroke="#1f5c8f" strokeWidth="1.500" /></svg>
        </button>
        <input
          type="range"
          aria-label="Масштаб"
          defaultValue={49}
          className="h-px w-[107px] appearance-none bg-[#808080] [&::-webkit-slider-thumb]:h-2.5 [&::-webkit-slider-thumb]:w-2 [&::-webkit-slider-thumb]:appearance-none [&::-webkit-slider-thumb]:rounded-full [&::-webkit-slider-thumb]:border [&::-webkit-slider-thumb]:border-[#23405b] [&::-webkit-slider-thumb]:bg-[#5f8fb8]"
        />
        <button aria-label="Увеличить">
          <svg width="12" height="12" viewBox="0 0 12 12"><circle cx="6" cy="6" r="5" fill="#d6ecfa" stroke="#54718c" /><path d="M3 6h6M6 3v6" stroke="#1f5c8f" strokeWidth="1.500" /></svg>
        </button>
      </StatusField>
      <StatusField className="w-[38px] shrink-0 justify-center">100%</StatusField>
    </footer>
  );
}

export default function App() {
  return (
    <div className="flex h-screen flex-col overflow-hidden bg-[#f0f0f0] text-black font-['Open_Sans','Noto_Sans',sans-serif]">
      <TitleBar />
      <nav className="flex h-[27px] shrink-0 items-center gap-2.5 border-b border-[#c8c4bc] bg-linear-to-b from-white to-[#d4d9ec] to-35% pr-2 pl-1.5 text-xs">
        {MENU.map(([before, key, after]) => (
          <button key={before + key + after}>
            {before}
            <u>{key}</u>
            {after}
          </button>
        ))}
        <button aria-label="Закрыть документ" className="ml-auto">
          <svg width="9" height="9" viewBox="0 0 9 9"><path d="M1 1l7 7M8 1L1 8" stroke="#5b6472" strokeWidth="2" /></svg>
        </button>
      </nav>
      <Toolbars />
      <FormulaBar />
      <main className="flex min-h-0 flex-1">
        <div className="min-w-0 flex-1 overflow-hidden border-l border-[#a0a0a0] bg-white">
          <Sheet />
        </div>
        <VerticalScroll />
      </main>
      <BottomBar />
      <StatusBar />
    </div>
  );
}
